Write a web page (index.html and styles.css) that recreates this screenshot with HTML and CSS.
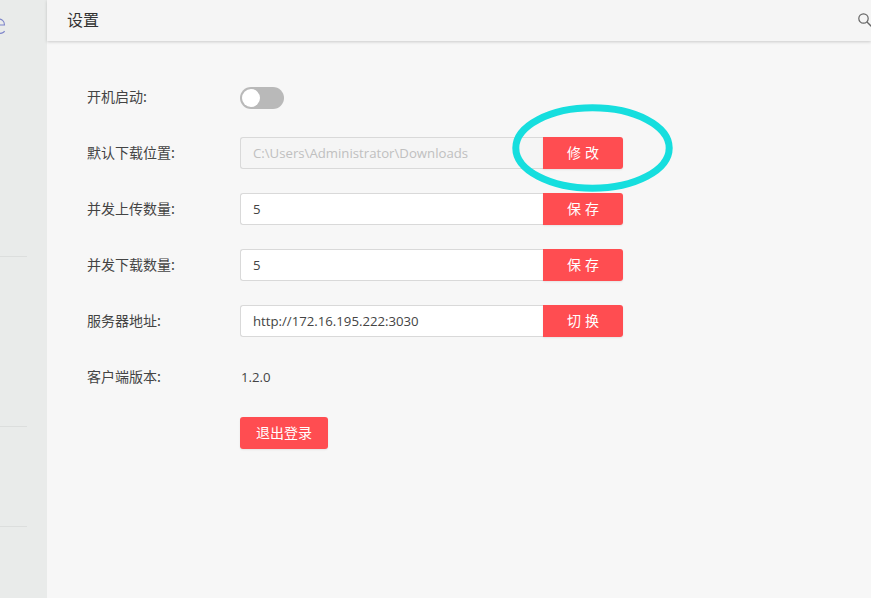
FILE: index.html
```html
<!DOCTYPE html>
<html lang="zh">
<head>
<meta charset="utf-8">
<title>设置</title>
<link rel="stylesheet" href="styles.css">
</head>
<body>
<div class="app">
  <aside class="sidebar">
    <svg class="side-logo" width="8" height="20" viewBox="0 0 8 20"><path d="M-3 9 H4.500 C4.500 5 2 2.500 -3 3 M4.500 15 C4 17 2 17.500 -3 17.500" fill="none" stroke="#7d84c9" stroke-width="1.100"/></svg>
    <div class="side-line line-a"></div>
    <div class="side-line line-b"></div>
    <div class="side-line line-c"></div>
  </aside>
  <main class="main">
    <header class="topbar">
      <h1 class="title">设置</h1>
      <svg class="search" width="16" height="16" viewBox="0 0 16 16"><circle cx="5.500" cy="5.500" r="4.700" fill="none" stroke="#666" stroke-width="1.200"/><path d="M9 9 L14 14" stroke="#666" stroke-width="1.300"/></svg>
    </header>
    <section class="form">
      <div class="row">
        <span class="label">开机启动:</span>
        <span class="toggle"><span class="knob"></span></span>
      </div>
      <div class="row">
        <span class="label">默认下载位置:</span>
        <span class="field disabled">C:\Users\Administrator\Downloads</span>
        <button class="btn side">修 改</button>
      </div>
      <div class="row">
        <span class="label">并发上传数量:</span>
        <span class="field">5</span>
        <button class="btn side">保 存</button>
      </div>
      <div class="row">
        <span class="label">并发下载数量:</span>
        <span class="field">5</span>
        <button class="btn side">保 存</button>
      </div>
      <div class="row">
        <span class="label">服务器地址:</span>
        <span class="field">http://172.16.195.222:3030</span>
        <button class="btn side">切 换</button>
      </div>
      <div class="row">
        <span class="label">客户端版本:</span>
        <span class="value">1.2.0</span>
      </div>
      <div class="row">
        <span class="label"></span>
        <button class="btn logout">退出登录</button>
      </div>
    </section>
    <svg class="mark" width="165" height="94" viewBox="0 0 165 94"><ellipse cx="82.500" cy="47" rx="76.700" ry="40.200" fill="none" stroke="#16dede" stroke-width="7"/></svg>
  </main>
</div>
</body>
</html>
```
FILE: styles.css
```css
* { box-sizing: border-box; }
html, body { margin: 0; height: 100%; overflow: hidden; }
body {
  font-family: "Open Sans", "Noto Sans CJK SC", sans-serif;
  font-size: 13.2px;
  color: #444;
  background: #f7f7f7;
}
.app { display: flex; height: 598px; }
.sidebar {
  position: relative;
  width: 47px;
  flex: none;
  background: #e9ebea;
}
.side-logo { position: absolute; left: 0; top: 16px; }
.side-line { position: absolute; left: 0; width: 27px; height: 1px; background: #dcdedd; }
.line-a { top: 256px; }
.line-b { top: 426px; }
.line-c { top: 526px; }
.main { position: relative; flex: 1; min-width: 0; }
.topbar {
  display: flex;
  align-items: center;
  justify-content: space-between;
  height: 41px;
  padding-left: 20px;
  background: #f5f5f5;
  box-shadow: 0 1px 3px rgba(0, 0, 0, 0.18);
}
.title {
  margin: 0 0 4px;
  font-family: "Noto Sans CJK SC", sans-serif;
  font-size: 16px;
  line-height: 20px;
  font-weight: 400;
  color: #333;
}
.search { margin-right: -3px; }
.form { padding: 40px 0 0 40px; }
.row { display: flex; align-items: center; height: 32px; margin-bottom: 24px; }
.label {
  width: 153px;
  flex: none;
  margin-bottom: 2px;
  font-family: "Noto Sans CJK SC", sans-serif;
  font-size: 14px;
  line-height: 20px;
  color: #444;
}
.toggle {
  position: relative;
  display: block;
  width: 44px;
  height: 22px;
  margin-top: 2px;
  border-radius: 11px;
  background: #b9b9b9;
}
.knob {
  position: absolute;
  left: 2px;
  top: 2px;
  width: 18px;
  height: 18px;
  border-radius: 50%;
  background: #fff;
}
.field {
  display: flex;
  align-items: center;
  width: 303px;
  height: 32px;
  padding-left: 12px;
  border: 1px solid #d9d9d9;
  border-right: 0;
  border-radius: 3px 0 0 3px;
  background: #fff;
  color: #444;
}
.field.disabled { background: #f5f5f5; color: #c0c0c0; }
.btn {
  height: 32px;
  border: 0;
  padding: 0 0 2px;
  background: #ff4d51;
  color: #fff;
  font-family: "Noto Sans CJK SC", sans-serif;
  font-size: 14px;
  line-height: 20px;
  box-shadow: 0 1px 2px rgba(0, 0, 0, 0.08);
}
.side { width: 80px; border-radius: 0 3px 3px 0; word-spacing: 1px; }
.logout { width: 88px; border-radius: 3px; }
.value { margin-left: 1px; color: #444; }
.mark { position: absolute; left: 463px; top: 101px; pointer-events: none; }
```
